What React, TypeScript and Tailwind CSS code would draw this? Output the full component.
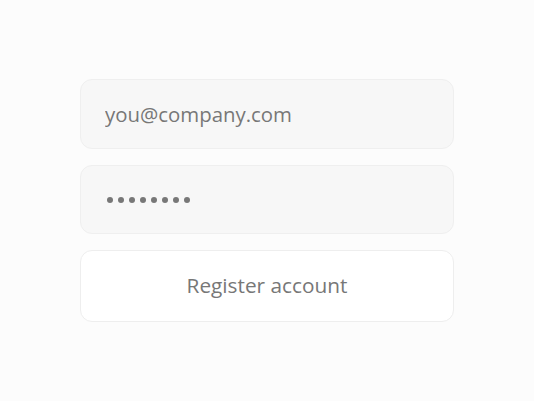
import React from 'react';

const dots = Array.from({ length: 8 });

export default function App() {
    return (
        <div className="flex h-[401px] w-full items-center justify-center bg-[#fcfcfc]" style={{ fontFamily: '"Open Sans", "Noto Sans", sans-serif' }}>
            <form className="flex w-[374px] flex-col gap-4" onSubmit={(e) => e.preventDefault()}>
                <input
                    type="email"
                    placeholder="you@company.com"
                    className="h-[70px] w-full rounded-xl border border-[#efefef] bg-[#f7f7f7] px-6 text-[20.4px] text-[#777777] placeholder:text-[#777777] outline-none"
                />
                {/* password field, masked */}
                <div className="flex h-[69px] w-full items-center gap-[5px] rounded-xl border border-[#efefef] bg-[#f7f7f7] pl-[26px]">
                    {dots.map((_, i) => (
                        <span key={i} className="h-[6px] w-[6px] rounded-full bg-[#777777]" />
                    ))}
                </div>
                <button
                    type="submit"
                    className="h-[72px] w-full rounded-xl border border-[#eeeeee] bg-white text-[20.8px] text-[#777777]"
                >
                    Register account
                </button>
            </form>
        </div>
    );
}
